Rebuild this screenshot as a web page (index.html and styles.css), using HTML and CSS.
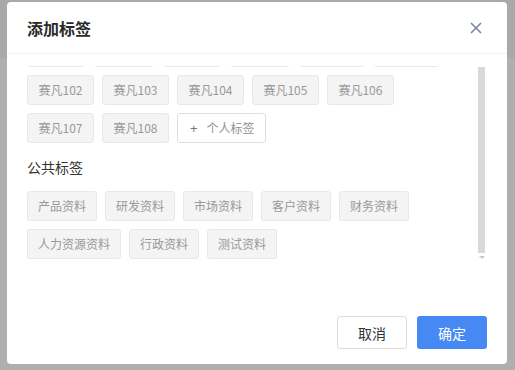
FILE: index.html
```html
<!DOCTYPE html>
<html lang="zh-CN">
<head>
    <meta charset="UTF-8">
    <meta name="viewport" content="width=device-width, initial-scale=1.0">
    <title>添加标签</title>
    <link rel="stylesheet" href="styles.css">
</head>
<body>

    <div class="dialog">
        <div class="dialog-header">
            <span class="dialog-title">添加标签</span>
            <svg class="close-btn" width="14" height="14" viewBox="0 0 14 14">
                <path d="M2 2 L12 12 M12 2 L2 12" stroke="#7d8798" stroke-width="1.6" fill="none"/>
            </svg>
        </div>

        <div class="dialog-body">
            <div class="tag-scroll">
                <!-- row scrolled out of view, only the bottom edges show -->
                <div class="tag-edges">
                    <span class="tag-edge short"></span>
                    <span class="tag-edge short"></span>
                    <span class="tag-edge short"></span>
                    <span class="tag-edge short"></span>
                    <span class="tag-edge long"></span>
                    <span class="tag-edge long"></span>
                </div>
                <div class="tag-list personal">
                    <span class="tag num">赛凡102</span>
                    <span class="tag num">赛凡103</span>
                    <span class="tag num">赛凡104</span>
                    <span class="tag num">赛凡105</span>
                    <span class="tag num">赛凡106</span>
                    <span class="tag num">赛凡107</span>
                    <span class="tag num">赛凡108</span>
                    <span class="tag tag-add"><span class="plus">+</span>个人标签</span>
                </div>

                <div class="section-title">公共标签</div>
                <div class="tag-list">
                    <span class="tag">产品资料</span>
                    <span class="tag">研发资料</span>
                    <span class="tag">市场资料</span>
                    <span class="tag">客户资料</span>
                    <span class="tag">财务资料</span>
                    <span class="tag">人力资源资料</span>
                    <span class="tag">行政资料</span>
                    <span class="tag">测试资料</span>
                </div>
            </div>
            <div class="scrollbar">
                <div class="scroll-thumb"></div>
                <div class="scroll-arrow"></div>
            </div>
        </div>

        <div class="dialog-footer">
            <button class="btn btn-cancel">取消</button>
            <button class="btn btn-ok">确定</button>
        </div>
    </div>

</body>
</html>
```

FILE: styles.css
```css
body {
    margin: 0;
    height: 370px;
    overflow: hidden;
    font-family: "Noto Sans CJK SC", "Liberation Sans", sans-serif;
    background: linear-gradient(#a9a9a9 0, #a9a9a9 58px, #afafaf 58px);
}
.dialog {
    width: 500px;
    height: 362px;
    margin: 2px 0 0 7px;
    background-color: #fff;
    border-radius: 4px;
    display: flex;
    flex-direction: column;
}
.dialog-header {
    height: 51px;
    border-bottom: 1px solid #f2f2f2;
    padding: 0 24px 0 20px;
    display: flex;
    align-items: center;
    justify-content: space-between;
}
.dialog-title {
    font-size: 16px;
    font-weight: bold;
    color: #2a2a2a;
}
.close-btn {
    display: block;
}
.dialog-body {
    height: 208px;
    display: flex;
    overflow: hidden;
}
.tag-scroll {
    flex-grow: 1;
    padding: 0 20px 0 20px;
    overflow: hidden;
}
.tag-edges {
    display: flex;
    gap: 10px;
    height: 13px;
    margin-bottom: 8px;
}
.tag-edge {
    height: 12px;
    border-bottom: 1px solid #e8e8e8;
    border-radius: 0 0 3px 3px;
}
.tag-edge.short {
    width: 58px;
}
.tag-edge.long {
    width: 65px;
}
.tag-list {
    display: flex;
    flex-wrap: wrap;
    gap: 8px;
}
.tag {
    height: 28px;
    line-height: 28px;
    padding: 0 10px;
    font-size: 12px;
    color: #999;
    background-color: #f4f4f4;
    border: 1px solid #e8e8e8;
    border-radius: 3px;
    white-space: nowrap;
}
.tag.num {
    padding: 0 10.5px;
}
.tag-add {
    background-color: #fff;
    border-color: #dedede;
    color: #909090;
}
.plus {
    font-family: "Liberation Sans", sans-serif;
    font-size: 13px;
    margin: 0 9px 0 2px;
    color: #777;
}
.section-title {
    font-size: 14px;
    color: #333;
    line-height: 20px;
    margin: 14px 0;
}
.scrollbar {
    width: 7px;
    margin-right: 22px;
    padding-top: 13px;
    display: flex;
    flex-direction: column;
    align-items: center;
}
.scroll-thumb {
    width: 7px;
    height: 186px;
    background-color: #d9d9d9;
}
.scroll-arrow {
    margin-top: 3px;
    width: 0;
    height: 0;
    border-left: 3px solid transparent;
    border-right: 3px solid transparent;
    border-top: 3px solid #c8c8c8;
}
.dialog-footer {
    margin-top: auto;
    padding: 0 20px 15px 0;
    display: flex;
    justify-content: flex-end;
    gap: 10px;
}
.btn {
    width: 70px;
    height: 33px;
    font-family: "Noto Sans CJK SC", sans-serif;
    font-size: 14px;
    border-radius: 3px;
    cursor: pointer;
}
.btn-cancel {
    background-color: #fff;
    color: #333;
    border: 1px solid #dcdcdc;
}
.btn-ok {
    background-color: #4688f4;
    color: #fff;
    border: none;
}
```
